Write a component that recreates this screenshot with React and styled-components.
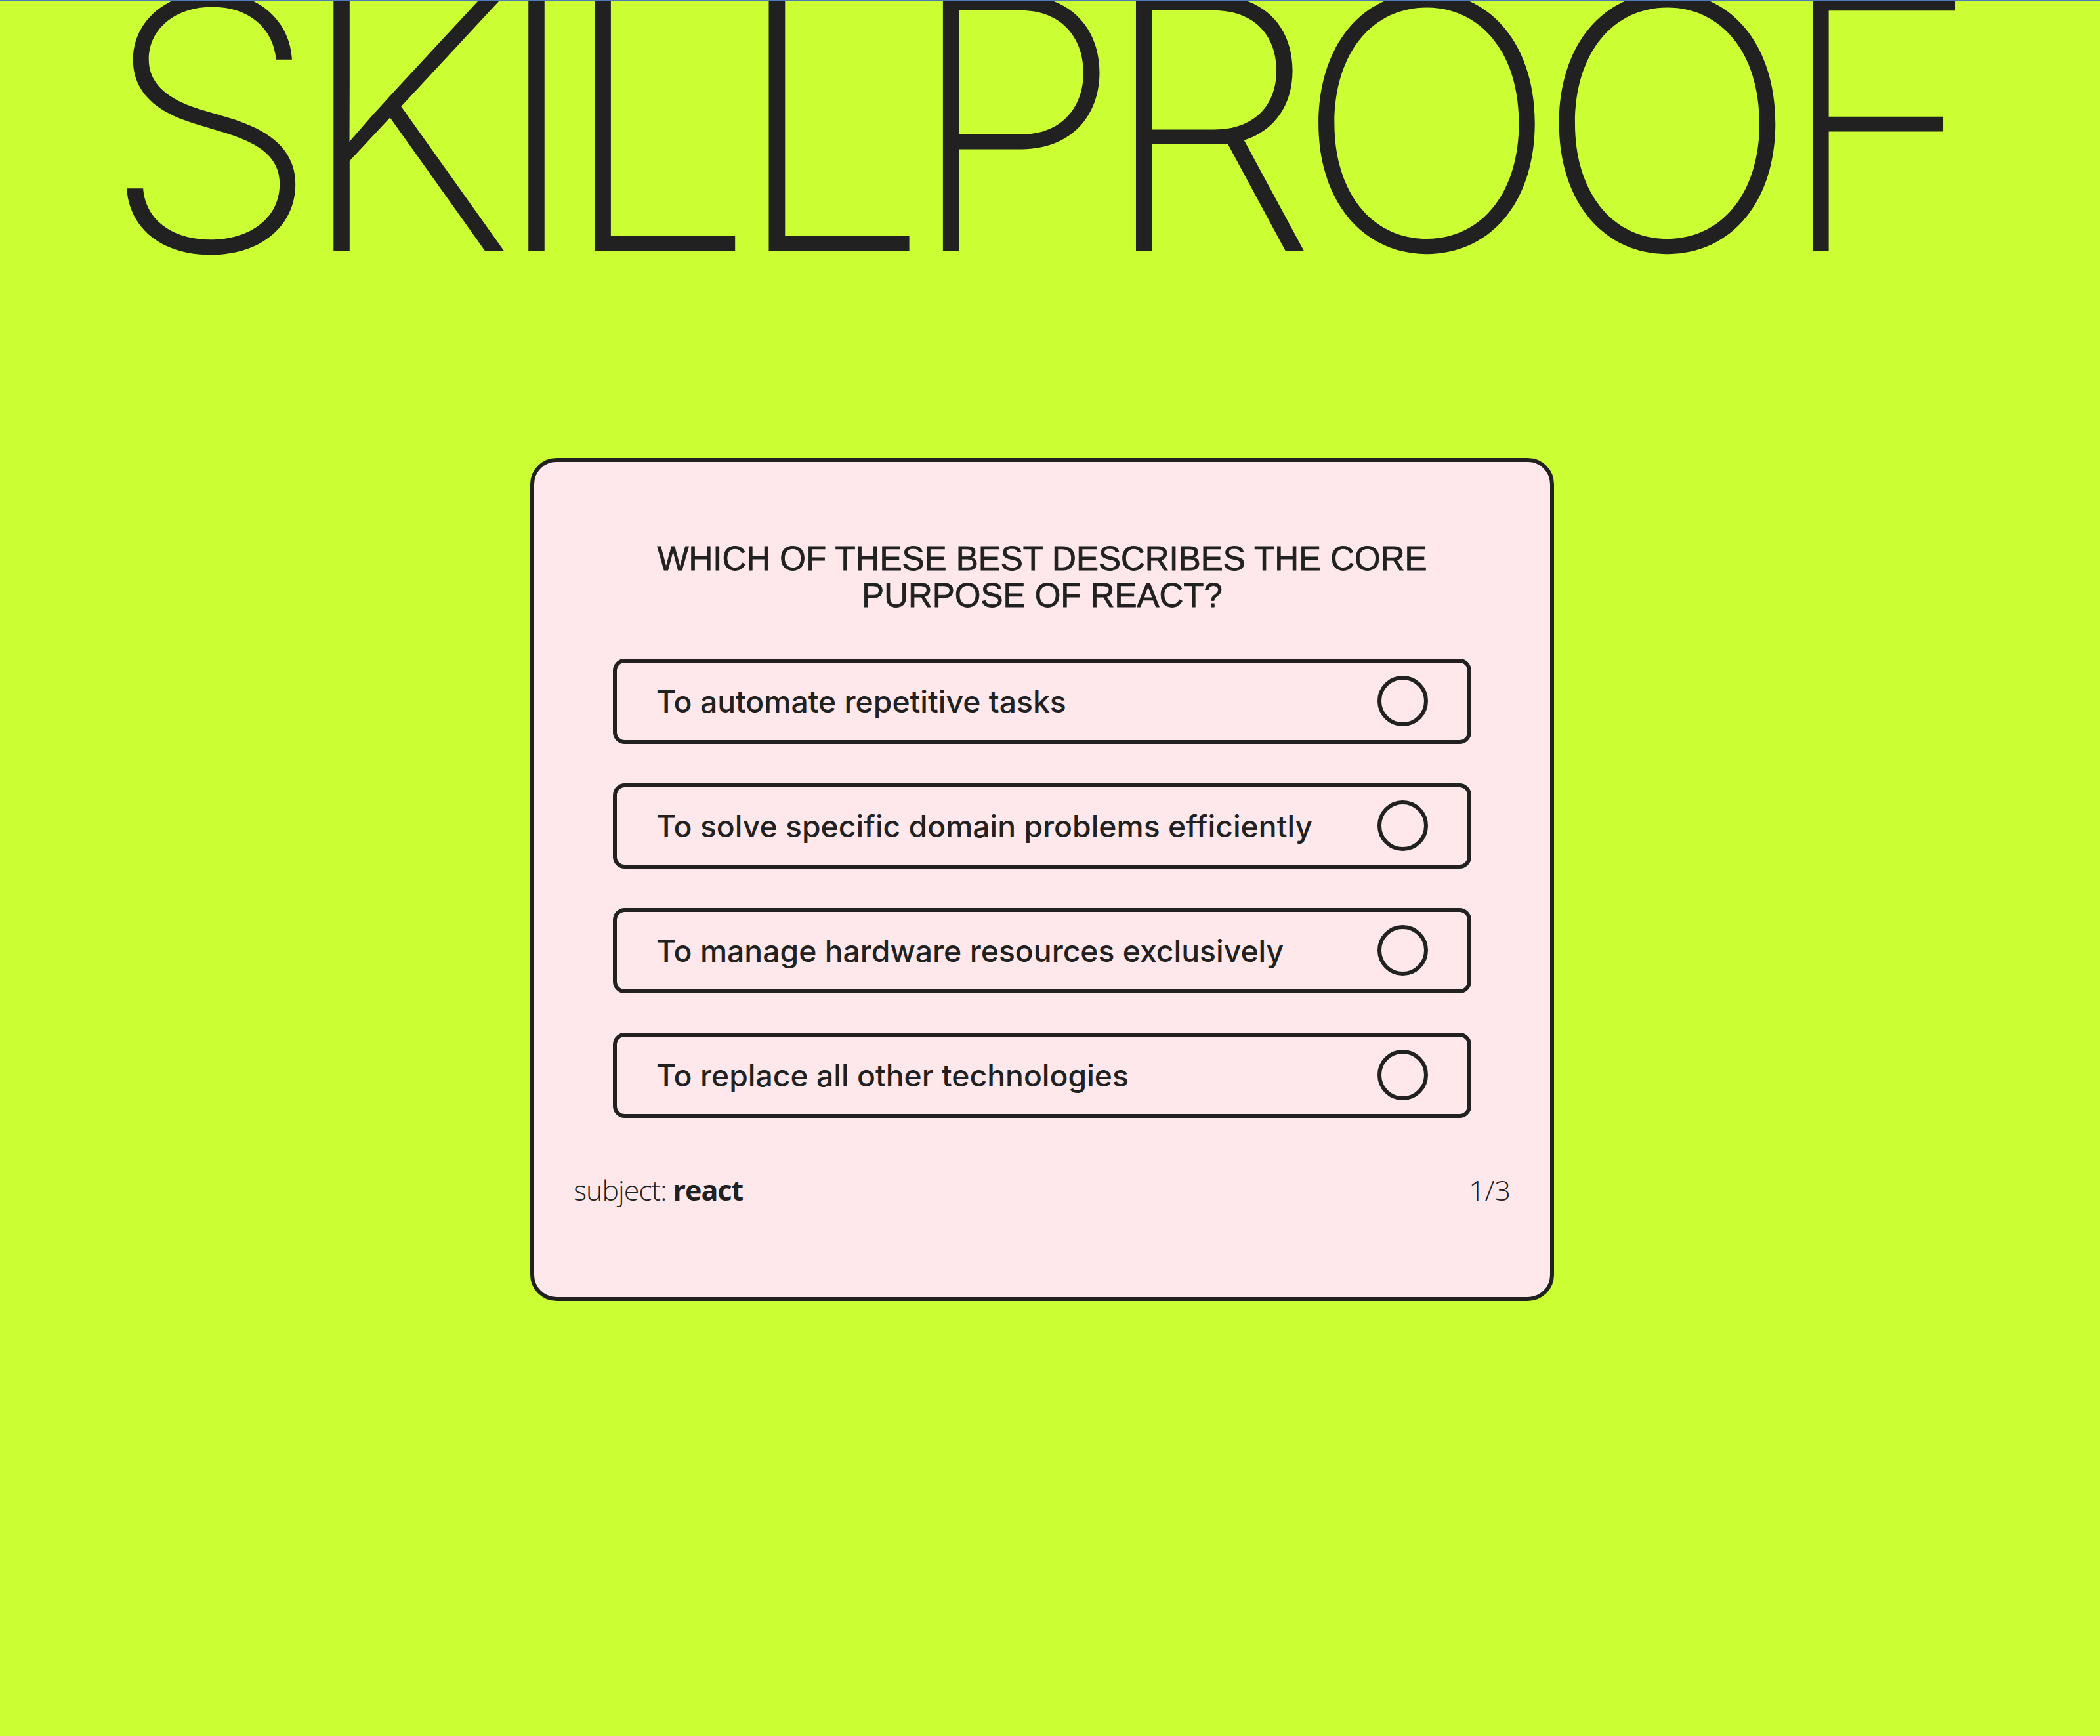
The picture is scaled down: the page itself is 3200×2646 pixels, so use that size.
import React from 'react';
import styled, { createGlobalStyle } from 'styled-components';

const GlobalStyle = createGlobalStyle`
  html, body {
    margin: 0;
    padding: 0;
    background: #ccff33;
  }
  * {
    box-sizing: border-box;
  }
`;

const questions = [
  'To automate repetitive tasks',
  'To solve specific domain problems efficiently',
  'To manage hardware resources exclusively',
  'To replace all other technologies'
];

const App = () => {
  return (
    <Page>
      <GlobalStyle />
      <Title>SKILLPROOF</Title>
      <Card>
        <Question>
          WHICH OF THESE BEST DESCRIBES THE CORE
          <br />
          PURPOSE OF REACT?
        </Question>
        <OptionList>
          {questions.map(text => (
            <Option key={text}>
              <OptionText>{text}</OptionText>
              <Radio />
            </Option>
          ))}
        </OptionList>
        <Footer>
          <Subject>
            subject: <strong>react</strong>
          </Subject>
          <Counter>1/3</Counter>
        </Footer>
      </Card>
    </Page>
  );
};

const Page = styled.div`
  min-height: 2646px;
  border-top: 2px solid #4f7cb8;
  display: flex;
  flex-direction: column;
  align-items: center;
  padding-right: 24px;
  overflow: hidden;
  color: #212121;
`;

const Title = styled.h1`
  margin: 0 37px 0 0;
  font-family: 'Inter', 'Liberation Sans', sans-serif;
  font-weight: 200;
  font-size: 534px;
  line-height: 0.7;
  letter-spacing: -35.5px;
  color: #212121;
  white-space: nowrap;
`;

const Card = styled.section`
  width: 1560px;
  margin-top: 322px;
  border: 6px solid #212121;
  border-radius: 40px;
  background: #ffe8eb;
  padding: 120px 60px 134px;
  display: flex;
  flex-direction: column;
`;

const Question = styled.h2`
  margin: 0;
  font-family: 'Liberation Sans', Arial, sans-serif;
  font-weight: 400;
  font-size: 51px;
  line-height: 56px;
  text-align: center;
  color: #212121;
  -webkit-text-stroke: 0.8px #212121;
`;

const OptionList = styled.div`
  display: flex;
  flex-direction: column;
  gap: 60px;
  margin: 68px 60px 0;
`;

const Option = styled.label`
  height: 130px;
  border: 6px solid #212121;
  border-radius: 18px;
  display: flex;
  align-items: center;
  justify-content: space-between;
  padding: 0 60px;
  cursor: pointer;
`;

const OptionText = styled.span`
  font-family: 'Inter', 'Liberation Sans', sans-serif;
  font-weight: 500;
  font-size: 46.3px;
  color: #212121;
`;

const Radio = styled.span`
  width: 77px;
  height: 77px;
  border: 6px solid #212121;
  border-radius: 50%;
  flex-shrink: 0;
`;

const Footer = styled.div`
  display: flex;
  justify-content: space-between;
  align-items: baseline;
  margin-top: 80px;
  font-family: 'Open Sans', 'Noto Sans', sans-serif;
  font-size: 43px;
  color: #212121;
`;

const Subject = styled.span`
  font-weight: 300;
  letter-spacing: -1px;

  strong {
    font-weight: 700;
  }
`;

const Counter = styled.span`
  font-weight: 300;
`;

export default App;
